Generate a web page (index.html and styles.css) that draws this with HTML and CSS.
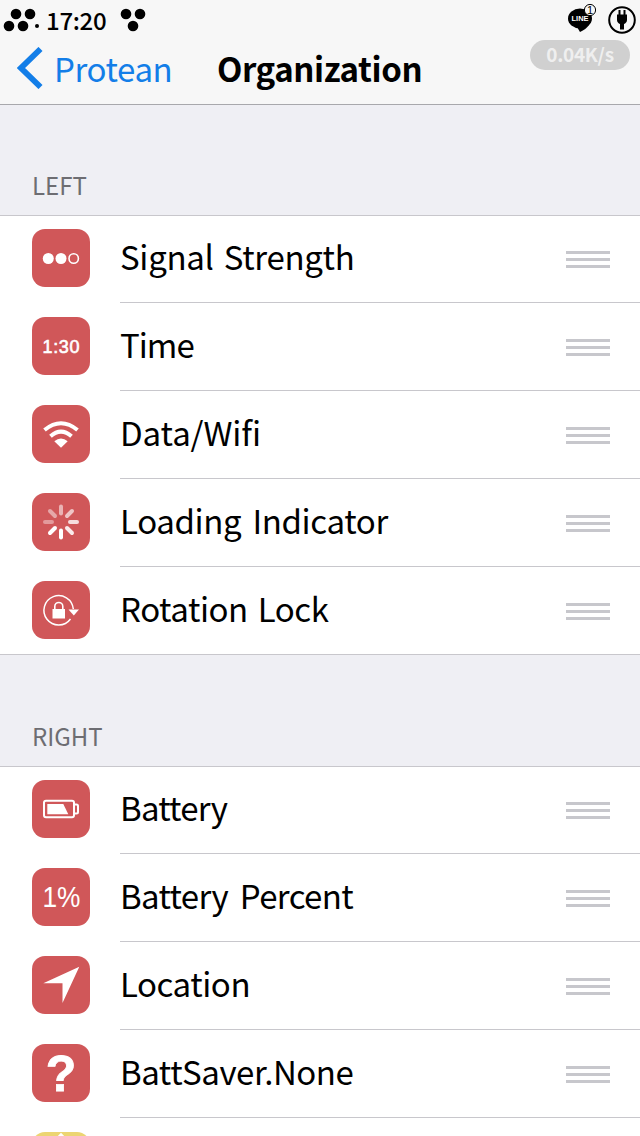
FILE: index.html
```
<!DOCTYPE html>
<html lang="en">
<head>
  <meta charset="UTF-8">
  <meta name="viewport" content="width=device-width, initial-scale=1.0">
  <title>Organization</title>
  <link rel="stylesheet" href="styles.css">
</head>
<body>

  <div class="screen">

    <!-- Status bar + navigation -->
    <header class="header">
      <div class="status">
        <svg class="signal" width="40" height="24" viewBox="0 0 40 24">
          <circle cx="16" cy="6" r="5.300"/><circle cx="30" cy="6" r="5.300"/>
          <circle cx="9" cy="18" r="5.300"/><circle cx="23" cy="18" r="5.300"/>
          <circle cx="37" cy="18" r="2"/>
        </svg>
        <span class="clock">17:20</span>
        <svg class="wifi-dots" width="26" height="24" viewBox="0 0 26 24">
          <circle cx="6" cy="6" r="5.300"/><circle cx="20" cy="6" r="5.300"/><circle cx="13" cy="18" r="5.300"/>
        </svg>
        <div class="status-right">
          <svg width="30" height="32" viewBox="0 0 30 32">
            <ellipse cx="13" cy="16.500" rx="12" ry="10"/>
            <path d="M10 25l3 5c4-2 7-4 9-7z"/>
            <circle cx="23" cy="8" r="5.600" class="badge"/>
            <text x="13" y="19" class="line-text" textLength="17" lengthAdjust="spacingAndGlyphs">LINE</text>
            <text x="23" y="12" class="badge-text">1</text>
          </svg>
          <svg width="28" height="28" viewBox="0 0 28 28">
            <circle cx="14" cy="14" r="12.800" class="ring"/>
            <path d="M10.500 4h2v4.500h3V4h2v4.500H19V14c0 2-1.500 3.500-3 4v5.500h-4V18c-1.500-.5-3-2-3-4V8.500h1.500z"/>
          </svg>
        </div>
      </div>
      <div class="navbar">
        <a class="back" href="#">
          <svg width="26" height="42" viewBox="0 0 26 42"><path d="M23.500 2 4 21l19.500 19"/></svg>
          <span>Protean</span>
        </a>
        <h1>Organization</h1>
      </div>
      <div class="speed">0.04K/s</div>
    </header>

    <h2 class="left-title">LEFT</h2>
    <ul class="list">
      <li>
        <svg class="icon" viewBox="0 0 58 58">
          <circle cx="16.300" cy="29.500" r="5.500"/><circle cx="29" cy="29.500" r="5.500"/>
          <circle cx="41.700" cy="29.500" r="4.700" class="stroke thin"/>
        </svg>
        <div class="row"><span class="t-signal">Signal Strength</span><i class="grip"></i></div>
      </li>
      <li>
        <svg class="icon" viewBox="0 0 58 58">
          <text x="29" y="36" class="icon-time" textLength="37">1:30</text>
        </svg>
        <div class="row"><span class="t-time">Time</span><i class="grip"></i></div>
      </li>
      <li>
        <svg class="icon" viewBox="0 0 58 58">
          <path d="M12.500 25Q29 11.500 45.500 25M18.500 31.300Q29 22 39.500 31.300" class="stroke wave"/>
          <path d="M29 42.800 22.300 36.300Q29 30.500 35.700 36.300z"/>
        </svg>
        <div class="row"><span class="t-data">Data/Wifi</span><i class="grip"></i></div>
      </li>
      <li>
        <svg class="icon" viewBox="0 0 58 58">
          <g class="stroke spinner">
            <path d="M29 20.500v-7" opacity=".55"/>
            <path d="m35 23 5-5" opacity=".65"/>
            <path d="M38 29h7" opacity=".8"/>
            <path d="m35 35 5 5" opacity=".88"/>
            <path d="M29 37.500v7"/>
            <path d="m23 35-5 5"/>
            <path d="M20 29h-7" opacity=".4"/>
            <path d="m23 23-5-5" opacity=".48"/>
          </g>
        </svg>
        <div class="row"><span class="t-loading">Loading Indicator</span><i class="grip"></i></div>
      </li>
      <li>
        <svg class="icon" viewBox="0 0 58 58">
          <path d="M41.300 28A14.700 14.700 0 1 0 38.500 38" class="stroke ring-thin"/>
          <path d="M36.500 28.500h10.500l-5.200 6z"/>
          <path d="M20.500 28h12.500v9.500H20.500z"/>
          <path d="M22.800 28.500v-3a4 4 0 0 1 8 0v3" class="stroke thin"/>
        </svg>
        <div class="row"><span class="t-rotation">Rotation Lock</span><i class="grip"></i></div>
      </li>
    </ul>

    <h2 class="right-title">RIGHT</h2>
    <ul class="list">
      <li>
        <svg class="icon" viewBox="0 0 58 58">
          <rect x="12" y="20.700" width="30" height="16.600" rx="2" class="stroke box"/>
          <path d="M42 24.500h2.500q1.500 0 1.500 1.500v6q0 1.500-1.500 1.500H42" class="stroke box"/>
          <path d="M15.300 24h16l5 10.300h-21z"/>
        </svg>
        <div class="row"><span class="t-battery">Battery</span><i class="grip"></i></div>
      </li>
      <li>
        <svg class="icon" viewBox="0 0 58 58">
          <text x="29.500" y="38.500" class="icon-percent" textLength="38" lengthAdjust="spacingAndGlyphs">1%</text>
        </svg>
        <div class="row"><span class="t-percent">Battery Percent</span><i class="grip"></i></div>
      </li>
      <li>
        <svg class="icon" viewBox="0 0 58 58"><path d="M47.300 10.700 11.300 27.300H30.500V47z"/></svg>
        <div class="row"><span class="t-location">Location</span><i class="grip"></i></div>
      </li>
      <li>
        <svg class="icon" viewBox="0 0 58 58">
          <text x="29" y="46.500" class="icon-question">?</text>
        </svg>
        <div class="row"><span class="t-saver">BattSaver.None</span><i class="grip"></i></div>
      </li>
      <li>
        <svg class="icon yellow" viewBox="0 0 58 58"><path d="m29 .8 6 6H23z"/></svg>
        <div class="row"></div>
      </li>
    </ul>

  </div>

</body>
</html>
```
FILE: styles.css
```
* {
  box-sizing: border-box;
}

body {
  margin: 0;
  font-family: "Noto Sans CJK SC", "Open Sans", sans-serif;
  color: #000;
}

.screen {
  width: 640px;
  height: 1136px;
  overflow: hidden;
  background: #efeff4;
}

/* Header */
.header {
  position: relative;
  height: 105px;
  background: #f7f7f7;
  border-bottom: 1px solid #a8a8ac;
}

.status {
  display: flex;
  height: 40px;
  padding: 8px 4px 0 0;
}

.clock {
  width: 59px;
  margin-left: 6px;
  font-size: 24px;
  line-height: 24px;
  font-weight: 500;
  letter-spacing: -.3px;
  white-space: nowrap;
}

.wifi-dots {
  margin-left: 15px;
}

.status-right {
  display: flex;
  gap: 11px;
  margin: -2px 0 0 auto;
}

.status-right > :first-child {
  margin-top: -4px;
}

.badge {
  fill: #f7f7f7;
  stroke: #000;
  stroke-width: 1;
}

.line-text {
  font: bold 8px "Liberation Sans", sans-serif;
  fill: #fff;
  text-anchor: middle;
}

.badge-text {
  font: 11px "Liberation Sans", sans-serif;
  text-anchor: middle;
}

.ring {
  fill: none;
  stroke: #000;
  stroke-width: 2;
}

.navbar {
  display: flex;
  height: 60px;
  padding: 5px 0 0 17px;
}

.back {
  display: flex;
  width: 200px;
  color: #137ee8;
  font-size: 33px;
  line-height: 46px;
  letter-spacing: -.4px;
  text-decoration: none;
}

.back svg {
  margin: 2px 11px 0 0;
  fill: none;
  stroke: #137ee8;
  stroke-width: 5.8;
}

h1 {
  margin: 0;
  font-size: 33px;
  line-height: 46px;
  font-weight: 700;
  letter-spacing: -.4px;
}

/* Network speed bubble */
.speed {
  position: absolute;
  top: 40px;
  right: 10px;
  width: 100px;
  height: 30px;
  border-radius: 15px;
  background: #d0d0d0;
  color: #efefef;
  font-size: 19px;
  font-weight: 700;
  line-height: 28px;
  letter-spacing: -.3px;
  text-align: center;
}

/* Lists */
h2 {
  margin: 0;
  padding-left: 32px;
  color: #6d6d72;
  font-size: 24px;
  line-height: 30px;
  font-weight: 400;
}

.left-title {
  height: 110px;
  padding-top: 65px;
}

.right-title {
  height: 111px;
  padding-top: 66px;
}

.list {
  margin: 0;
  padding: 0;
  list-style: none;
  background: #fff;
  box-shadow: inset 0 1px #c8c7cc, inset 0 -1px #c8c7cc;
}

.list li {
  display: flex;
  height: 88px;
  padding-left: 32px;
}

.icon {
  width: 58px;
  height: 58px;
  margin: 14px 30px 0 0;
  border-radius: 13px;
  background: #d05759;
  fill: #fff;
}

.yellow {
  background: #ecd572;
}

.row {
  display: flex;
  flex: 1;
  align-items: center;
  justify-content: space-between;
  padding-right: 30px;
  border-bottom: 1px solid #c8c7cc;
  font-size: 33px;
  line-height: 46px;
  white-space: nowrap;
}

.row span {
  padding-bottom: 5px;
}

/* Label spacing */
.t-signal {
  letter-spacing: -.3px;
  word-spacing: 3px;
}

.t-time {
  letter-spacing: -1px;
}

.t-data {
  letter-spacing: -.1px;
}

.t-loading {
  letter-spacing: -.35px;
  word-spacing: 4px;
}

.t-rotation {
  letter-spacing: -.45px;
  word-spacing: 3px;
}

.t-battery {
  letter-spacing: -.8px;
}

.t-percent {
  letter-spacing: -.65px;
  word-spacing: 5px;
}

.t-location {
  letter-spacing: -.45px;
}

.t-saver {
  letter-spacing: -.45px;
}

.grip {
  width: 44px;
  height: 17px;
  margin-top: 2px;
  border-top: 3px solid #c7c7cc;
  border-bottom: 3px solid #c7c7cc;
  background: linear-gradient(#c7c7cc, #c7c7cc) 0 4px / 44px 3px no-repeat;
}

.stroke {
  fill: none;
  stroke: #fff;
}

.thin {
  stroke-width: 1.6;
}

.ring-thin {
  stroke-width: 1.5;
}

.wave {
  stroke-width: 4;
}

.spinner {
  stroke-width: 4;
  stroke-linecap: round;
}

.box {
  stroke-width: 2;
}

.icon-time {
  font: 18px "Liberation Sans", sans-serif;
  stroke: #fff;
  stroke-width: .6;
  text-anchor: middle;
}

.icon-percent {
  font: 29px "Liberation Sans", sans-serif;
  text-anchor: middle;
}

.icon-question {
  font: bold 50px "Liberation Sans", sans-serif;
  stroke: #fff;
  stroke-width: .8;
  text-anchor: middle;
}
```
